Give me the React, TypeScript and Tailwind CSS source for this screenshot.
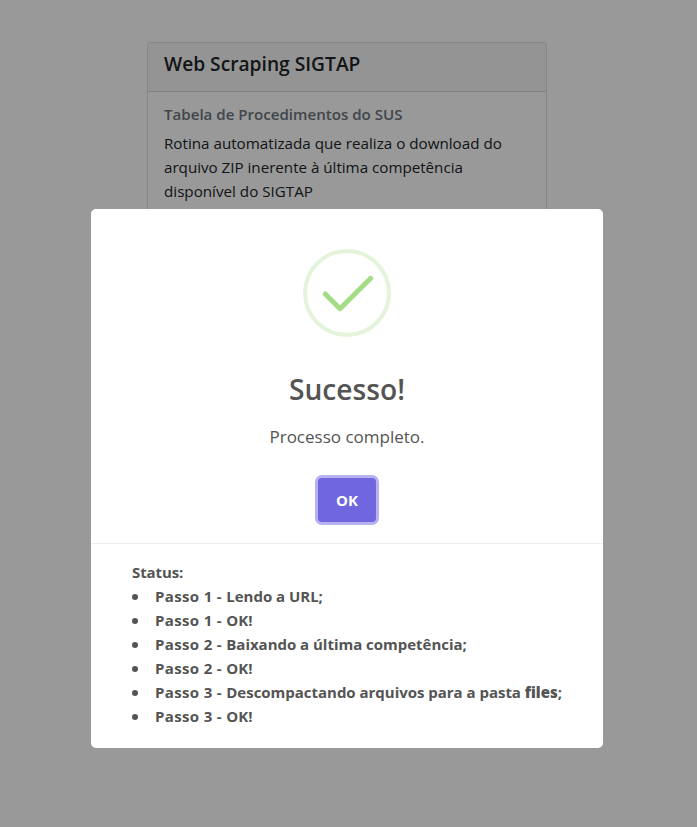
const steps = [
  { step: 'Passo 1 - ', text: 'Lendo a URL;' },
  { step: 'Passo 1 - ', text: 'OK!' },
  { step: 'Passo 2 - ', text: 'Baixando a última competência;' },
  { step: 'Passo 2 - ', text: 'OK!' },
  { step: 'Passo 3 - ', text: 'Descompactando arquivos para a pasta ', bold: 'files', end: ';' },
  { step: 'Passo 3 - ', text: 'OK!' },
];

function SuccessIcon() {
  return (
    <svg className="mx-auto block h-[88px] w-[88px]" viewBox="0 0 88 88" fill="none">
      <circle cx="44" cy="44" r="42" stroke="#e4f4db" strokeWidth="4" />
      <path d="M22.3 45L37 59.7L67.7 29.3" stroke="#a5dc86" strokeWidth="5" strokeLinecap="round" strokeLinejoin="round" />
    </svg>
  );
}

function Card() {
  return (
    <section className="ml-[147px] h-[260px] w-[400px] rounded border border-black/[0.125] bg-white text-[#212529]">
      <header className="h-[49px] rounded-t border-b border-black/[0.125] bg-[#f7f7f7] px-4 pt-[9px]">
        <h5 className="text-[19.2px] leading-6 font-semibold whitespace-nowrap">Web Scraping SIGTAP</h5>
      </header>
      <div className="px-4 pt-[13px]">
        <h6 className="text-[15.1px] leading-[19px] font-semibold whitespace-nowrap text-[#6c757d]">Tabela de Procedimentos do SUS</h6>
        <p className="mt-[7px] text-[15.2px] leading-6 whitespace-nowrap">
          <span className="block">Rotina automatizada que realiza o download do</span>
          <span className="block tracking-[-0.02px]">arquivo ZIP inerente à última competência</span>
          <span className="block">disponível do SIGTAP</span>
        </p>
      </div>
    </section>
  );
}

function Dialog() {
  return (
    <div role="dialog" className="h-[539px] w-[512px] rounded-[5px] bg-white pt-10 text-[#545454]">
      <SuccessIcon />
      <h2 className="mt-[30px] text-center text-[28.2px] leading-[45px] font-semibold">Sucesso!</h2>
      <p className="mt-[11px] text-center text-[17px] leading-[27px]">Processo completo.</p>
      <div className="mt-7 flex justify-center">
        <button className="h-11 w-[58px] rounded-[4px] bg-[#7066e0] text-[15px] font-bold text-white shadow-[0_0_0_3px_rgba(112,102,224,0.5)]">OK</button>
      </div>
      <footer className="mt-[21px] border-t border-[#eeeeee] pt-4 pl-[41px] text-[15px] leading-6 font-bold">
        <p className="tracking-[-0.1px]">Status:</p>
        <ul>
          {steps.map((s) => (
            <li key={s.step + s.text} className="flex items-center whitespace-nowrap">
              <span className="mt-px mr-[17px] h-1.5 w-1.5 rounded-full bg-[#545454]" />
              <span>
                <span className="tracking-[0.35px]">{s.step}</span>
                <span className="tracking-[-0.02px]">{s.text}</span>
                <b className="font-extrabold">{s.bold}</b>
                {s.end}
              </span>
            </li>
          ))}
        </ul>
      </footer>
    </div>
  );
}

export default function App() {
  return (
    <main className="relative h-[827px] overflow-hidden bg-white pt-[42px] font-['Open_Sans','Noto_Sans',sans-serif]">
      <Card />
      <div className="absolute inset-0 bg-black/40 pt-[209px] pl-[91px]">
        <Dialog />
      </div>
    </main>
  );
}
